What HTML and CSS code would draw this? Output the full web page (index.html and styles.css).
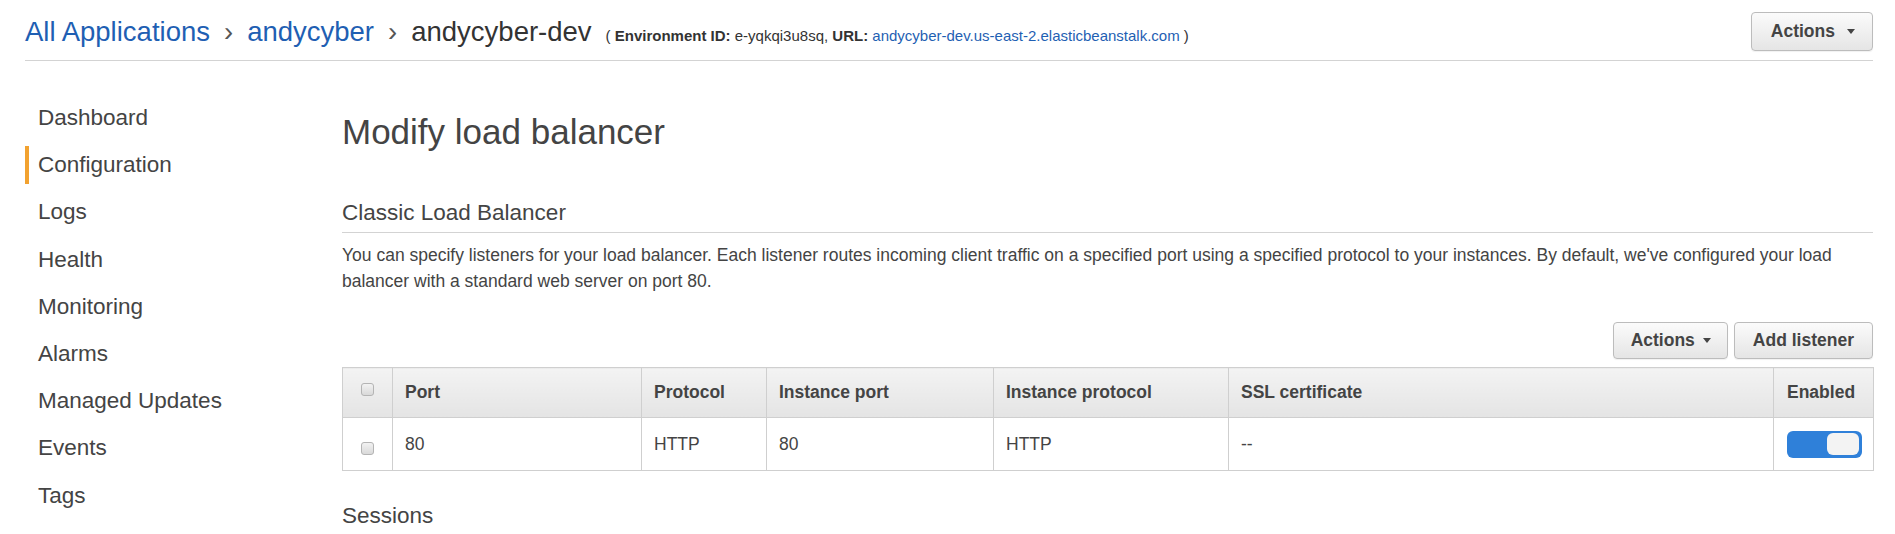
FILE: index.html
```html
<!DOCTYPE html>
<html lang="en">
<head>
<meta charset="utf-8">
<title>Modify load balancer</title>
<link rel="stylesheet" href="styles.css">
</head>
<body>
<header class="topbar">
  <div class="crumbs">
    <a class="crumb" href="#">All Applications</a><span class="sep">›</span><a class="crumb" href="#">andycyber</a><span class="sep">›</span><span class="current">andycyber-dev</span><span class="env">( <b>Environment ID:</b> e-yqkqi3u8sq, <b>URL:</b> <a href="#">andycyber-dev.us-east-2.elasticbeanstalk.com</a> )</span>
  </div>
  <button class="btn btn-top" type="button">Actions<span class="caret"></span></button>
</header>
<div class="layout">
  <nav class="sidenav">
    <a class="nav-item" href="#">Dashboard</a>
    <a class="nav-item active" href="#">Configuration</a>
    <a class="nav-item" href="#">Logs</a>
    <a class="nav-item" href="#">Health</a>
    <a class="nav-item" href="#">Monitoring</a>
    <a class="nav-item" href="#">Alarms</a>
    <a class="nav-item" href="#">Managed Updates</a>
    <a class="nav-item" href="#">Events</a>
    <a class="nav-item" href="#">Tags</a>
  </nav>
  <main class="content">
    <h1 class="title">Modify load balancer</h1>
    <h2 class="section">Classic Load Balancer</h2>
    <p class="desc">You can specify listeners for your load balancer. Each listener routes incoming client traffic on a specified port using a specified protocol to your instances. By default, we've configured your load balancer with a standard web server on port 80.</p>
    <div class="toolbar">
      <button class="btn btn-actions" type="button">Actions<span class="caret"></span></button>
      <button class="btn btn-add" type="button">Add listener</button>
    </div>
    <table class="listeners">
      <colgroup>
        <col class="c-cb"><col class="c-port"><col class="c-proto"><col class="c-iport"><col class="c-iproto"><col class="c-ssl"><col class="c-en">
      </colgroup>
      <thead>
        <tr class="head-row">
          <th class="cb-cell cb-head"><span class="checkbox"></span></th>
          <th>Port</th>
          <th>Protocol</th>
          <th>Instance port</th>
          <th>Instance protocol</th>
          <th>SSL certificate</th>
          <th class="en-head">Enabled</th>
        </tr>
      </thead>
      <tbody>
        <tr class="body-row">
          <td class="cb-cell cb-body"><span class="checkbox"></span></td>
          <td>80</td>
          <td>HTTP</td>
          <td>80</td>
          <td>HTTP</td>
          <td>--</td>
          <td class="en-cell"><span class="toggle"><span class="knob"></span></span></td>
        </tr>
      </tbody>
    </table>
    <h2 class="sessions">Sessions</h2>
  </main>
</div>
</body>
</html>
```

FILE: styles.css
```css
body {
  margin: 0;
  font-family: "Liberation Sans", Arial, Helvetica, sans-serif;
  color: #444;
  background: #fff;
}

.topbar {
  display: flex;
  justify-content: space-between;
  align-items: flex-start;
  margin: 0 22px 0 25px;
  height: 61px;
  box-sizing: border-box;
  padding-top: 12px;
  border-bottom: 1px solid #d3d3d3;
}

.crumbs {
  font-size: 27.5px;
  line-height: 39px;
  white-space: nowrap;
}

.crumb {
  color: #1f5fb3;
  text-decoration: none;
}

.sep {
  color: #555;
  margin: 0 14px;
}

.current {
  color: #333;
}

.env {
  font-size: 15px;
  color: #333;
  margin-left: 14px;
}

.env b {
  color: #333;
}

.env a {
  color: #1f5fb3;
  text-decoration: none;
}

.btn {
  display: inline-flex;
  align-items: center;
  box-sizing: border-box;
  height: 37px;
  padding: 0 18px;
  font-family: "Liberation Sans", Arial, Helvetica, sans-serif;
  font-weight: bold;
  font-size: 17.5px;
  color: #444;
  background: linear-gradient(#fbfbfb, #e5e5e5);
  border: 1px solid #bcbcbc;
  border-radius: 4px;
  box-shadow: 0 1px 1px rgba(0, 0, 0, 0.06);
  cursor: pointer;
}

.btn-top {
  height: 39px;
  padding: 0 17px 0 19px;
}

.btn-actions {
  padding: 0 16px 0 17px;
}

.caret {
  width: 0;
  height: 0;
  border-left: 4px solid transparent;
  border-right: 4px solid transparent;
  border-top: 5px solid #444;
  margin-left: 8px;
}

.btn-top .caret {
  margin-left: 12px;
}

.layout {
  display: flex;
}

.sidenav {
  flex: none;
  width: 317px;
  margin-left: 25px;
  padding-top: 38px;
}

.nav-item {
  display: block;
  height: 38px;
  line-height: 38px;
  margin-bottom: 9.2px;
  border-left: 4px solid transparent;
  padding-left: 9px;
  font-size: 22.5px;
  color: #444;
  text-decoration: none;
}

.nav-item.active {
  border-left-color: #f2a230;
}

.content {
  flex: 1;
  min-width: 0;
  margin-right: 22px;
  padding-top: 50px;
}

.title {
  margin: 0;
  font-size: 35px;
  font-weight: normal;
  line-height: 42px;
  color: #444;
}

.section {
  margin: 46px 0 0;
  padding-bottom: 6px;
  font-size: 22.5px;
  font-weight: normal;
  line-height: 27px;
  color: #444;
  border-bottom: 1px solid #d3d3d3;
}

.desc {
  margin: 9px 0 0;
  font-size: 17.5px;
  line-height: 26.25px;
  color: #444;
}

.toolbar {
  display: flex;
  justify-content: flex-end;
  gap: 6px;
  margin-top: 27.5px;
}

.listeners {
  width: 100%;
  margin-top: 8px;
  border-collapse: collapse;
  table-layout: fixed;
  font-size: 17.5px;
}

.c-cb { width: 50px; }
.c-port { width: 249px; }
.c-proto { width: 125px; }
.c-iport { width: 227px; }
.c-iproto { width: 235px; }
.c-ssl { width: 545px; }
.c-en { width: 100px; }

.listeners th,
.listeners td {
  border: 1px solid #cfcfcf;
  padding: 0 12px;
  text-align: left;
  color: #444;
}

.listeners th {
  font-weight: bold;
  background: linear-gradient(#f3f3f3, #e4e4e4);
}

.head-row {
  height: 50px;
}

.body-row {
  height: 53px;
}

.listeners .cb-cell {
  padding: 0;
  text-align: center;
  vertical-align: top;
}

.cb-head {
  padding-top: 15px !important;
}

.cb-body {
  padding-top: 24px !important;
}

.checkbox {
  display: block;
  width: 13px;
  height: 13px;
  margin: 0 auto;
  box-sizing: border-box;
  border: 1px solid #b4b4b4;
  border-radius: 3px;
  background: linear-gradient(#f2f2f2, #d9d9d9);
}

.listeners .en-head,
.listeners .en-cell {
  padding-left: 13px;
}

.toggle {
  display: flex;
  justify-content: flex-end;
  align-items: center;
  box-sizing: border-box;
  width: 75px;
  height: 27px;
  padding-right: 3px;
  border-radius: 6px;
  background: #2f80d9;
}

.knob {
  width: 32px;
  height: 22px;
  border-radius: 6px;
  background: #f3f3f3;
}

.sessions {
  margin: 31px 0 0;
  font-size: 22.5px;
  font-weight: normal;
  line-height: 27px;
  color: #444;
}
```
